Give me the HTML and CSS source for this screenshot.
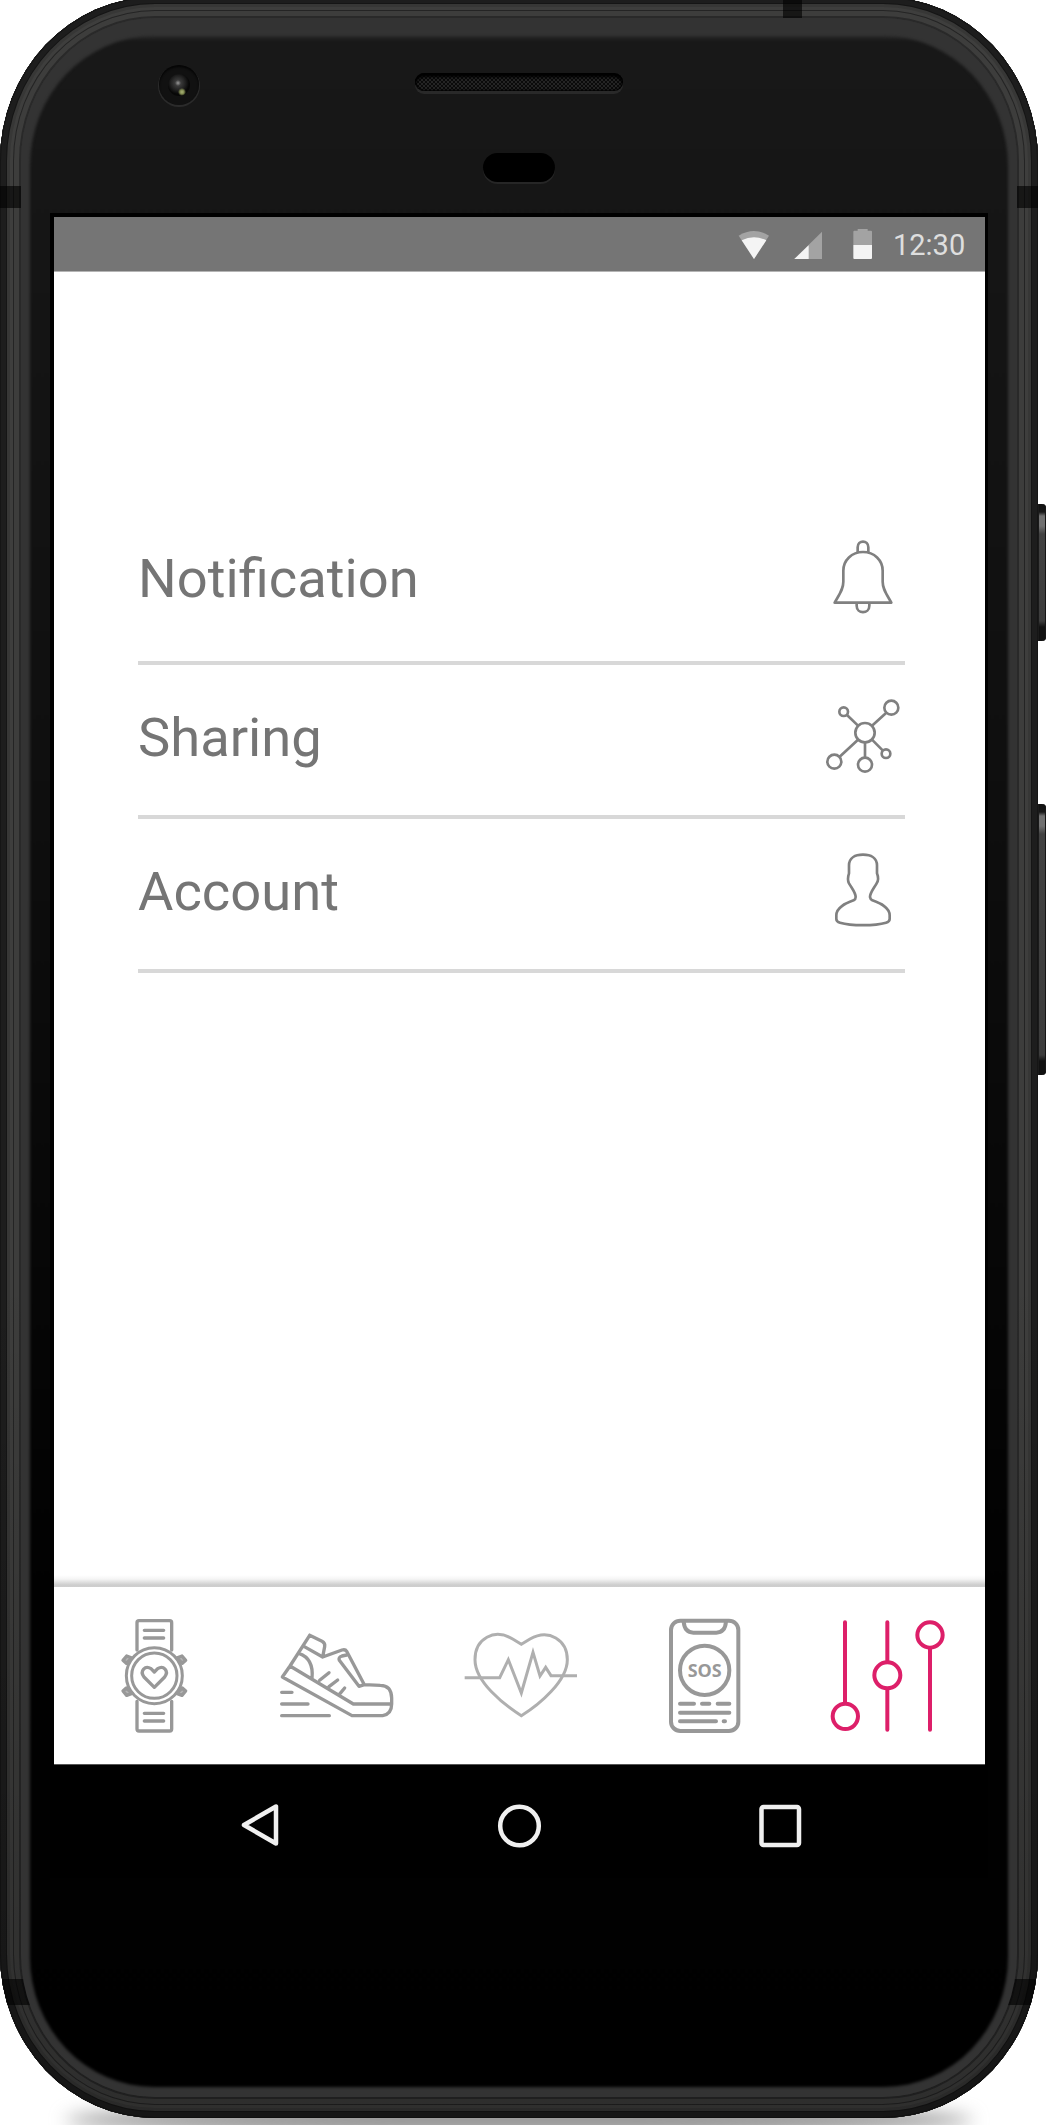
FILE: index.html
```html
<!DOCTYPE html>
<html lang="en">
<head>
<meta charset="utf-8">
<title>Settings</title>
<link rel="stylesheet" href="styles.css">
</head>
<body>
<div class="stage">
  <div class="floor-shadow"></div>
  <div class="key key-power"></div>
  <div class="key key-volume"></div>
  <div class="phone">
    <i class="band band-top"></i>
    <i class="band band-left"></i>
    <i class="band band-right"></i>
    <i class="band band-low-left"></i>
    <i class="band band-low-right"></i>
    <div class="face">
      <div class="bezel">
        <div class="camera"><i class="lens"></i></div>
        <div class="speaker"></div>
        <div class="sensor"></div>
      </div>
      <div class="screen">
        <header class="status">
          <svg class="status-icons" width="140" height="36" viewBox="120 678 420 108">
            <path d="M128 704Q174 676 219 704L174 774Z" fill="#a3a3a3"/>
            <path d="M137 718Q174 700 211 718L174 774Z" fill="#f4f4f4"/>
            <path d="M378 692V774H295Z" fill="#a3a3a3"/>
            <path d="M338 733V774H295Z" fill="#f4f4f4"/>
            <path d="M472 732V692Q472 689 475 689H485V684H515V689H525Q528 689 528 692V732Z" fill="#a3a3a3"/>
            <path d="M472 732H528V771Q528 774 525 774H475Q472 774 472 771Z" fill="#f4f4f4"/>
          </svg>
          <span class="clock">12:30</span>
        </header>
        <main class="content">
          <ul class="menu">
            <li class="item item-first">
              <span class="label">Notification</span>
              <svg class="item-icon" width="80" height="80" viewBox="128 111 240 240">
                <path d="M163 308C178 281 189 268 189 245V212C189 181 214 156 248 156S307 181 307 212V245C307 268 318 281 333 308Z"/>
                <path d="M232 157V142C232 119 264 119 264 142V157M229 310V317C229 343 267 343 267 317V310"/>
              </svg>
            </li>
            <li class="item">
              <span class="label">Sharing</span>
              <svg class="item-icon" width="80" height="80" viewBox="128 587 240 240">
                <circle cx="254" cy="697" r="29"/><circle cx="190" cy="634" r="13"/><circle cx="333" cy="622" r="21"/>
                <circle cx="317" cy="760" r="13"/><circle cx="254" cy="793" r="21"/><circle cx="162" cy="784" r="21"/>
                <path d="M200 644L233 676M318 637L275 676M275 718L307 750M254 726V772M233 718L178 769"/>
              </svg>
            </li>
            <li class="item">
              <span class="label">Account</span>
              <svg class="item-icon" width="80" height="80" viewBox="128 1049 240 240">
                <path d="M248 1063C272 1063 290 1073 290 1095V1119Q297 1137 289 1149C280 1165 269 1177 269 1190Q270 1197 276 1200C301 1209 328 1221 328 1245V1256Q328 1264 317 1267C284 1277 212 1277 179 1267Q168 1264 168 1256V1245C168 1221 195 1209 220 1200Q226 1197 226 1190C226 1177 215 1165 206 1149Q200 1137 206 1119V1095C206 1073 224 1063 248 1063Z"/>
              </svg>
            </li>
          </ul>
        </main>
        <nav class="tabs">
          <svg class="tab" viewBox="-14 144 348 348">
            <path d="M109 240V158Q109 152 115 152H207Q213 152 213 158V240M109 394V477Q109 483 115 483H207Q213 483 213 477V394"/>
            <path d="M131 181H189M131 204H189M131 430H189M131 453H189"/>
            <circle cx="161" cy="317" r="84" stroke-width="9"/><circle cx="161" cy="317" r="68" stroke-width="9"/>
            <path d="M161 352L130 321C116 302 134 285 151 296L161 306L171 296C188 285 206 302 192 321Z"/>
            <path d="M67 271L78 258L94 264L77 280ZM255 271L244 258L228 264L245 280ZM67 363L78 376L94 370L77 354ZM255 363L244 376L228 370L245 354Z" fill="#b5b5b5"/>
          </svg>
          <svg class="tab" viewBox="537 144 348 348">
            <path d="M629 196L666 214Q676 219 674 230L668 261L613 230M629 196L570 288L547 321L756 437H848Q875 432 875 402V384Q874 346 841 346L793 344L740 244Q736 237 726 240L668 261M570 288L760 402H873M597 250C628 261 640 286 636 325M726 258Q714 262 718 271L777 349L793 344M740 255L726 258M659 331L687 308M687 350L713 330M718 373L734 354M545 367H576M545 402H624M545 437H688"/>
          </svg>
          <svg class="tab tab-thin" viewBox="68 144 348 348">
            <path d="M243 437C190 404 104 335 104 269C104 205 162 174 217 207L243 223L269 207C326 174 381 211 381 269C381 333 297 404 243 437Z"/>
            <path d="M73 323H178L204 269L243 369L278 247L299 318L316 292L332 317H410"/>
          </svg>
          <svg class="tab" viewBox="619 144 348 348">
            <rect x="691" y="152" width="202" height="331" rx="28" stroke-width="12"/>
            <path d="M729 155C731 178 740 188 758 188H827C845 188 854 178 856 155" stroke-width="12"/>
            <circle cx="792" cy="301" r="74" stroke-width="12"/>
            <path d="M718 401H760M784 401H806M831 401H866M718 428H866M718 454H826M849 454H853" stroke-width="12"/>
            <text class="sos" x="741" y="322" textLength="102" lengthAdjust="spacingAndGlyphs">SOS</text>
          </svg>
          <svg class="tab tab-active" viewBox="150 144 348 348">
            <path d="M195 157V398M322 157V274M322 357V479M450 236V479"/>
            <circle cx="196" cy="439" r="38"/><circle cx="322" cy="316" r="39"/><circle cx="450" cy="195" r="38"/>
          </svg>
        </nav>
        <footer class="system">
          <svg class="sys" viewBox="0 0 52 52"><path d="M10 25L42 6.500V43.500Z"/></svg>
          <svg class="sys" viewBox="0 0 52 52"><circle cx="25.500" cy="26" r="19.300"/></svg>
          <svg class="sys" viewBox="0 0 52 52"><rect x="7.500" y="7" width="37.500" height="38" rx="2"/></svg>
        </footer>
      </div>
    </div>
  </div>
</div>
</body>
</html>
```
FILE: styles.css
```css
* { box-sizing: border-box; }
html, body { margin: 0; background: #fff; }
body { font-family: Roboto, "Liberation Sans", sans-serif; }
svg { display: block; }

.stage { position: relative; width: 1046px; height: 2125px; overflow: hidden; }

.floor-shadow {
  position: absolute; left: 65px; top: 2107px; width: 908px; height: 26px;
  border-radius: 50%/60%; background: #8d8d8d; filter: blur(9px);
}

.key {
  position: absolute; left: 1034px; width: 12px; border-radius: 0 4px 4px 0;
  background: linear-gradient(#111 0, #161616 8px, #707070 12px, #707070 22px, #414141 30px, #3c3c3c calc(100% - 20px), #111 calc(100% - 14px));
  box-shadow: inset -1px 0 0 #161616, inset 5px 0 0 #1b1b1b;
}
.key-power { top: 504px; height: 137px; }
.key-volume { top: 804px; height: 271px; }

.phone {
  position: relative; width: 1038px; height: 2121px; margin-top: -3px; padding: 21px;
  border-radius: 155px / 164px; overflow: hidden;
  background: #333;
  box-shadow:
    inset 0 0 0 1px #151515,
    inset 0 0 0 6px #1d1d1d,
    inset 0 0 0 7px #151515,
    inset 0 0 0 10px #373736,
    inset 0 0 0 13px #3e3e3d,
    inset 0 0 0 14px #242424,
    inset 0 0 0 19px #3d3d3c,
    inset 0 0 0 21px #292929;
}
.phone::after {
  content: ""; position: absolute; inset: 0; pointer-events: none;
  background: linear-gradient(transparent 60%, rgba(0, 0, 0, .25));
  z-index: 0;
}

.band { position: absolute; background: rgba(0, 0, 0, .62); }
.band-top { left: 783px; top: 0; width: 19px; height: 24px; }
.band-left { left: 0; top: 189px; width: 24px; height: 22px; }
.band-right { right: 0; top: 189px; width: 24px; height: 22px; }
.band-low-left { left: 0; top: 1982px; width: 34px; height: 26px; }
.band-low-right { right: 0; top: 1982px; width: 34px; height: 26px; }

.face {
  position: relative; z-index: 1; height: 100%; padding: 0 29px;
  border-radius: 134px / 143px; background: #333; overflow: hidden;
}
.face::before {
  content: ""; position: absolute; inset: 18px 9px 10px; border-radius: 124px / 130px;
  background: linear-gradient(#282828 0, #181818 5px, #151515 190px, #0f0f0f 700px, #0a0a0a 1000px, #010101 1550px, #000);
  filter: blur(1.800px);
}

.bezel { position: relative; height: 195px; padding-top: 55px; }
.camera {
  position: absolute; left: 109px; top: 47px; width: 40px; height: 40px; border-radius: 50%;
  background: #111; box-shadow: 0 1px 0 1px #2b2b2b, inset 0 2px 2px #050505;
  padding: 9px;
}
.lens {
  display: block; width: 22px; height: 22px; border-radius: 50%;
  background:
    radial-gradient(circle at 14px 18px, #a9b277 0, #818b51 2px, transparent 4px),
    radial-gradient(circle at 10px 9px, #999 0, #3a3a3a 3px, #222 7px, #070707 11px);
}
.speaker {
  width: 208px; height: 18px; margin: 0 auto; border-radius: 9px;
  background: repeating-conic-gradient(#0a0a0a 0 25%, #242424 0 50%) 0 0 / 4px 4px;
  box-shadow: inset 0 4px 3px #000, inset 0 0 2px 1px #000, 0 3px 0 #292929;
}
.sensor {
  width: 72px; height: 29px; margin: 62px auto 0; border-radius: 15px;
  background: #000; box-shadow: 0 2px 0 #262626;
}

.screen {
  position: relative; width: 938px; height: 1665px; border: solid #000; border-width: 4px 3px 0 4px;
  background: #fff; display: flex; flex-direction: column;
}

.status {
  height: 55px; background: #757575; border-bottom: 1px solid #b4b4b4;
  display: flex; justify-content: flex-end; align-items: center; gap: 17px; padding: 2px 20px 0 0;
}
.status-icons { margin-top: -1px; }
.clock { font-size: 29px; line-height: 34px; color: #dedede; width: 72px; white-space: nowrap; }

.content {
  flex: 1; padding: 235px 80px 0 84px;
  background: linear-gradient(transparent calc(100% - 12px), #f5f5f5 calc(100% - 8px), #cdcdcd calc(100% - 2px), #cfcfcf);
}
.menu { list-style: none; margin: 0; padding: 0; }
.item {
  height: 154px; display: flex; align-items: center; justify-content: space-between;
  border-bottom: 4px solid #d8d8d8; padding: 0 2px 6px 0;
  font-size: 54.300px; line-height: 64px; color: #757575;
}
.item-first { height: 158px; padding-bottom: 12px; }
.label { padding-top: 2px; }
.item-icon { margin-bottom: 2px; fill: none; stroke: #808080; stroke-width: 8; stroke-linejoin: round; }

.tabs {
  height: 177px; background: #fff; padding: 0 5px 0 8px;
  display: grid; grid-template-columns: repeat(5, 1fr); place-items: center;
}
.tab { width: 116px; height: 116px; fill: none; stroke: #989898; stroke-width: 10; stroke-linecap: round; stroke-linejoin: round; }
.tab-thin { stroke: #afafaf; stroke-width: 9; stroke-linecap: butt; stroke-linejoin: miter; }
.tab-active { stroke: #dd1f69; stroke-width: 12; }
.sos { font: 700 55px "Open Sans", "Noto Sans", sans-serif; fill: #989898; stroke: none; }

.system {
  height: 114px; background: #000; border-top: 1px solid #555;
  display: grid; grid-template-columns: repeat(3, 260px); justify-content: center; justify-items: center;
  padding-top: 35px;
}
.sys { width: 52px; height: 52px; fill: none; stroke: #f0f0f0; stroke-width: 4.500; stroke-linejoin: round; }
```
